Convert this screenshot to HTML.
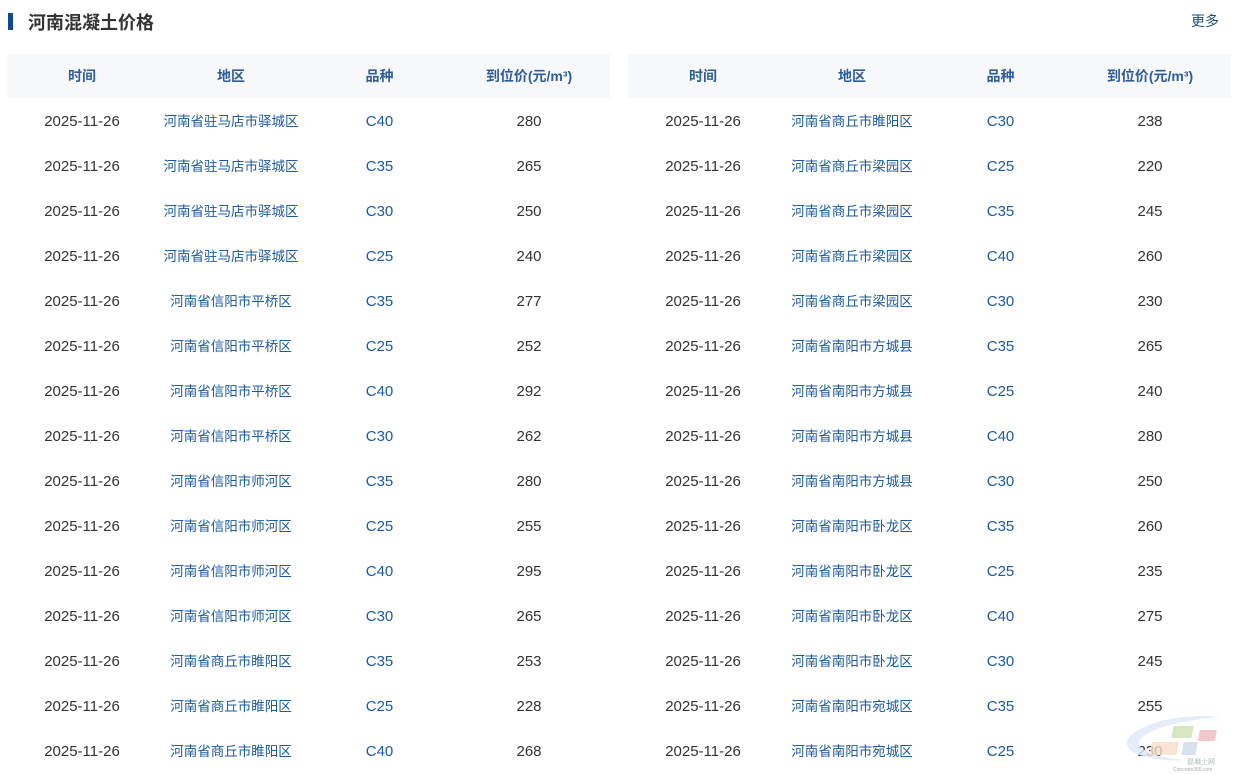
<!DOCTYPE html>
<html><head><meta charset="utf-8"><style>
*{margin:0;padding:0;box-sizing:border-box}
body{width:1238px;height:775px;background:#fff;font-family:"Liberation Sans","Noto Sans CJK SC",sans-serif;position:relative;overflow:hidden}
.bar{position:absolute;left:8px;top:13px;width:5px;height:17px;background:#0d4a94}
h1{position:absolute;left:28px;top:10px;font-size:18px;font-weight:bold;color:#333;line-height:26px}
.more{position:absolute;left:1191px;top:11px;font-size:14px;color:#1a4d8c;line-height:20px}
table{position:absolute;top:54px;width:603px;border-collapse:collapse;table-layout:fixed}
th{height:44px;background:#f6f8fa;color:#2d5d9c;font-size:14px;font-weight:bold;text-align:center}
td{height:45px;font-size:15px;line-height:20px;text-align:center;color:#333;white-space:nowrap;padding-top:2px}
td.b{color:#1a5aa6}
td.r{font-size:13.5px;padding-top:2px}
th:last-child,td:last-child{padding-right:6px}
col.a{width:150px}col.c{width:148px}col.d{width:149px}col.e{width:156px}
</style></head><body>
<div class="bar"></div><h1>河南混凝土价格</h1><div class="more">更多</div>
<table style="left:7px"><colgroup><col class="a"><col class="c"><col class="d"><col class="e"></colgroup>
<tr><th>时间</th><th>地区</th><th>品种</th><th>到位价(元/m³)</th></tr>
<tr><td>2025-11-26</td><td class="b r">河南省驻马店市驿城区</td><td class="b">C40</td><td>280</td></tr>
<tr><td>2025-11-26</td><td class="b r">河南省驻马店市驿城区</td><td class="b">C35</td><td>265</td></tr>
<tr><td>2025-11-26</td><td class="b r">河南省驻马店市驿城区</td><td class="b">C30</td><td>250</td></tr>
<tr><td>2025-11-26</td><td class="b r">河南省驻马店市驿城区</td><td class="b">C25</td><td>240</td></tr>
<tr><td>2025-11-26</td><td class="b r">河南省信阳市平桥区</td><td class="b">C35</td><td>277</td></tr>
<tr><td>2025-11-26</td><td class="b r">河南省信阳市平桥区</td><td class="b">C25</td><td>252</td></tr>
<tr><td>2025-11-26</td><td class="b r">河南省信阳市平桥区</td><td class="b">C40</td><td>292</td></tr>
<tr><td>2025-11-26</td><td class="b r">河南省信阳市平桥区</td><td class="b">C30</td><td>262</td></tr>
<tr><td>2025-11-26</td><td class="b r">河南省信阳市师河区</td><td class="b">C35</td><td>280</td></tr>
<tr><td>2025-11-26</td><td class="b r">河南省信阳市师河区</td><td class="b">C25</td><td>255</td></tr>
<tr><td>2025-11-26</td><td class="b r">河南省信阳市师河区</td><td class="b">C40</td><td>295</td></tr>
<tr><td>2025-11-26</td><td class="b r">河南省信阳市师河区</td><td class="b">C30</td><td>265</td></tr>
<tr><td>2025-11-26</td><td class="b r">河南省商丘市睢阳区</td><td class="b">C35</td><td>253</td></tr>
<tr><td>2025-11-26</td><td class="b r">河南省商丘市睢阳区</td><td class="b">C25</td><td>228</td></tr>
<tr><td>2025-11-26</td><td class="b r">河南省商丘市睢阳区</td><td class="b">C40</td><td>268</td></tr>
</table>
<table style="left:628px"><colgroup><col class="a"><col class="c"><col class="d"><col class="e"></colgroup>
<tr><th>时间</th><th>地区</th><th>品种</th><th>到位价(元/m³)</th></tr>
<tr><td>2025-11-26</td><td class="b r">河南省商丘市睢阳区</td><td class="b">C30</td><td>238</td></tr>
<tr><td>2025-11-26</td><td class="b r">河南省商丘市梁园区</td><td class="b">C25</td><td>220</td></tr>
<tr><td>2025-11-26</td><td class="b r">河南省商丘市梁园区</td><td class="b">C35</td><td>245</td></tr>
<tr><td>2025-11-26</td><td class="b r">河南省商丘市梁园区</td><td class="b">C40</td><td>260</td></tr>
<tr><td>2025-11-26</td><td class="b r">河南省商丘市梁园区</td><td class="b">C30</td><td>230</td></tr>
<tr><td>2025-11-26</td><td class="b r">河南省南阳市方城县</td><td class="b">C35</td><td>265</td></tr>
<tr><td>2025-11-26</td><td class="b r">河南省南阳市方城县</td><td class="b">C25</td><td>240</td></tr>
<tr><td>2025-11-26</td><td class="b r">河南省南阳市方城县</td><td class="b">C40</td><td>280</td></tr>
<tr><td>2025-11-26</td><td class="b r">河南省南阳市方城县</td><td class="b">C30</td><td>250</td></tr>
<tr><td>2025-11-26</td><td class="b r">河南省南阳市卧龙区</td><td class="b">C35</td><td>260</td></tr>
<tr><td>2025-11-26</td><td class="b r">河南省南阳市卧龙区</td><td class="b">C25</td><td>235</td></tr>
<tr><td>2025-11-26</td><td class="b r">河南省南阳市卧龙区</td><td class="b">C40</td><td>275</td></tr>
<tr><td>2025-11-26</td><td class="b r">河南省南阳市卧龙区</td><td class="b">C30</td><td>245</td></tr>
<tr><td>2025-11-26</td><td class="b r">河南省南阳市宛城区</td><td class="b">C35</td><td>255</td></tr>
<tr><td>2025-11-26</td><td class="b r">河南省南阳市宛城区</td><td class="b">C25</td><td>230</td></tr>
</table>
<svg style="position:absolute;left:1125px;top:712px" width="110" height="60">
<path d="M95 5 C50 0 5 15 2 30 C0 45 40 50 60 48 C30 45 10 38 15 28 C25 15 60 8 95 5Z" fill="#dde9f6" opacity=".8"/>
<rect x="51" y="14" width="20" height="12" fill="#d5e6c0" transform="skewX(-10)"/>
<rect x="78" y="18" width="17" height="11" fill="#f2c8cc" transform="skewX(-10)"/>
<rect x="32" y="30" width="27" height="13" fill="#f8dcc8" transform="skewX(-10)" opacity=".8"/>
<rect x="64" y="30" width="14" height="13" fill="#cfd8ea" transform="skewX(-10)" opacity=".8"/>
<text x="62" y="52" font-size="7" fill="#9aa" font-family="Liberation Serif,Noto Serif CJK SC,serif">混凝土网</text>
<text x="48" y="59" font-size="5" fill="#aaa" font-family="Liberation Sans,sans-serif">Concrete365.com</text>
</svg>
</body></html>
